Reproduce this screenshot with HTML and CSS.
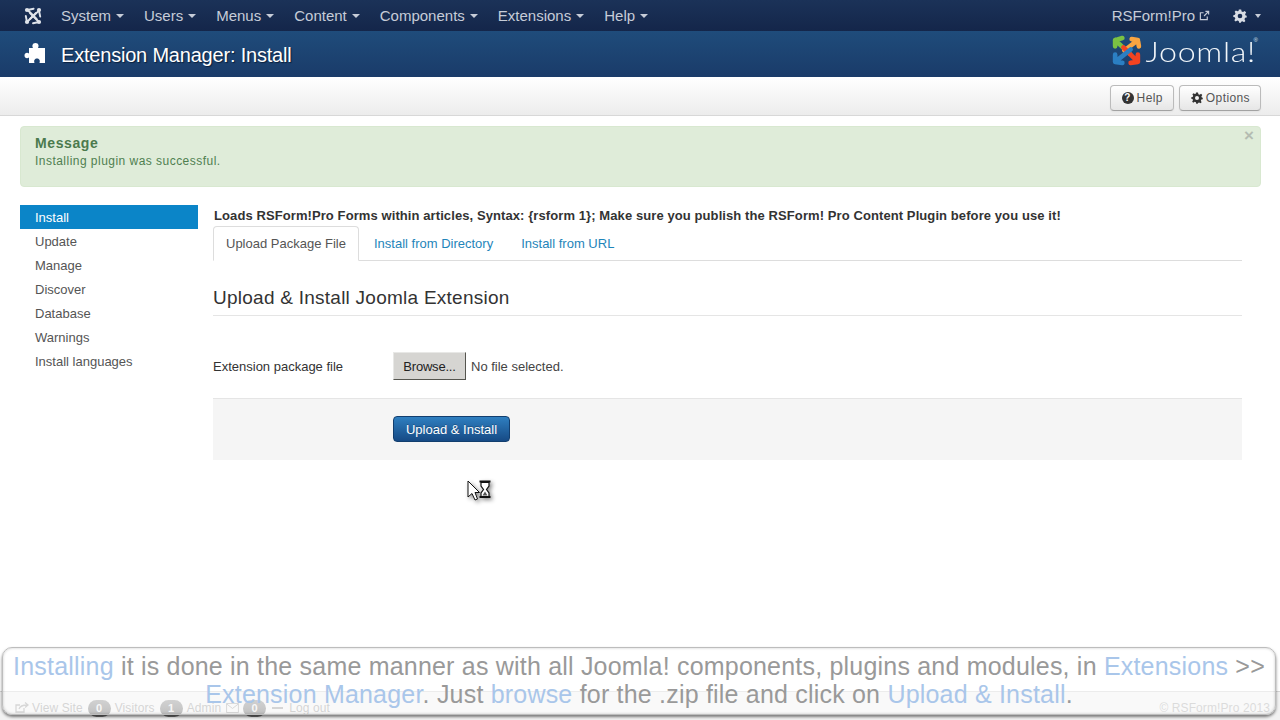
FILE: index.html
```html
<!DOCTYPE html>
<html lang="en">
<head>
<meta charset="utf-8">
<title>Extension Manager: Install</title>
<link rel="stylesheet" href="styles.css">
</head>
<body>
<nav class="navbar">
  <svg class="nav-logo" viewBox="0 0 30 30"><g class="logo-white"><path d="M6 5 L21 20 M6 5 L16 3"/><path d="M25 6 L10 20 M25 6 L27 16"/><path d="M25 25 L10 10 M25 25 L15 27"/><path d="M5 25 L20 10 M5 25 L3 15"/><circle cx="5" cy="5" r="3.500"/><circle cx="25" cy="5" r="3.500"/><circle cx="25" cy="25" r="3.500"/><circle cx="5" cy="25" r="3.500"/></g></svg>
  <ul class="menu">
    <li>System<i class="caret"></i></li>
    <li>Users<i class="caret"></i></li>
    <li>Menus<i class="caret"></i></li>
    <li>Content<i class="caret"></i></li>
    <li>Components<i class="caret"></i></li>
    <li>Extensions<i class="caret"></i></li>
    <li>Help<i class="caret"></i></li>
  </ul>
  <div class="nav-right">
    <span class="site">RSForm!Pro</span>
    <svg class="ext-icon" viewBox="0 0 12 12"><path d="M9 7 V10.500 H1.500 V3 H5 M5.500 6.500 L10.500 1.500 M7 1.500 H10.500 V5"/></svg>
    <svg class="gear gear-nav" viewBox="0 0 24 24"><use href="#gear-shape"/></svg>
    <i class="caret"></i>
  </div>
</nav>

<header class="titlebar">
  <svg class="puzzle" viewBox="0 0 22 21"><path d="M5 6 H9 C8 4.500 8 1 11.500 1 C15 1 15 4.500 14 6 H21 V21 H15.500 C16.500 18 15 16.500 13 16.500 C11 16.500 9.500 18 10.500 21 H5 V15.500 C3 17 0.500 16 0.500 13.500 C0.500 11 3 10 5 11.500 Z"/></svg>
  <h1>Extension Manager: Install</h1>
  <div class="brand">
    <svg class="brand-mark" viewBox="0 0 30 30">
      <path class="j-green" d="M4 5 L18 18 M4 5 L4 11 M4 5 L11 3"/>
      <path class="j-orange" d="M26 5 L13 15 M26 5 L20 4 M26 5 L27 11"/>
      <path class="j-red" d="M26 26 L12 12 M26 26 L26 19 M26 26 L19 27"/>
      <path class="j-blue" d="M4 26 L19 14 M4 26 L4 19 M4 26 L11 27"/>
    </svg>
    <span class="brand-name">Joomla!</span>
    <span class="brand-reg">®</span>
  </div>
</header>

<div class="toolbar">
  <button class="tool-btn"><span class="help-dot">?</span>Help</button>
  <button class="tool-btn"><svg class="gear gear-btn" viewBox="0 0 24 24"><use href="#gear-shape"/></svg>Options</button>
</div>

<div class="alert">
  <span class="alert-close">×</span>
  <h4>Message</h4>
  <p>Installing plugin was successful.</p>
</div>

<div class="layout">
  <ul class="side">
    <li class="active">Install</li>
    <li>Update</li>
    <li>Manage</li>
    <li>Discover</li>
    <li>Database</li>
    <li>Warnings</li>
    <li>Install languages</li>
  </ul>
  <main class="content">
    <p class="notice">Loads RSForm!Pro Forms within articles, Syntax: {rsform 1}; Make sure you publish the RSForm! Pro Content Plugin before you use it!</p>
    <div class="tabs">
      <span class="tab current">Upload Package File</span>
      <span class="tab">Install from Directory</span>
      <span class="tab">Install from URL</span>
    </div>
    <h2>Upload &amp; Install Joomla Extension</h2>
    <div class="field">
      <span class="field-label">Extension package file</span>
      <span class="browse">Browse...</span>
      <span class="no-file">No file selected.</span>
    </div>
    <div class="actions">
      <button class="primary">Upload &amp; Install</button>
    </div>
  </main>
</div>

<svg class="cursor" viewBox="0 0 26 24">
  <path class="cursor-arrow" d="M1 1 V17 L5 13.500 L8 20 L10.500 19 L8 12.500 H12.500 Z"/>
  <path class="cursor-glass" d="M14 2.500 H22 V6 L19.500 9.500 L22 13 V16.500 H14 V13 L16.500 9.500 L14 6 Z"/>
  <path class="cursor-bars" d="M12.500 1.500 H23.500 M12.500 17 H23.500"/>
  <path class="cursor-sand" d="M15.500 15.500 L18 11.500 L20.500 15.500 Z"/>
</svg>

<footer class="status">
  <span class="st-item"><svg class="st-icon" viewBox="0 0 14 12"><path d="M9 7 V11 H1 V4 H5 M4 8 C5 5 8 4 12 4 M10 1.500 L13 4 L10 6.500"/></svg>View Site</span>
  <span class="badge">0</span><span class="st-item">Visitors</span>
  <span class="badge">1</span><span class="st-item">Admin</span>
  <svg class="st-mail" viewBox="0 0 14 11"><path d="M0.500 0.500 H13.500 V10.500 H0.500 Z M0.500 1 L7 6 L13.500 1"/></svg>
  <span class="badge">0</span>
  <span class="st-dash"></span><span class="st-item">Log out</span>
  <span class="copyright">© RSForm!Pro 2013</span>
</footer>

<div class="caption">
  <p><b>Installing</b> it is done in the same manner as with all Joomla! components, plugins and modules, in <b>Extensions</b> &gt;&gt; <b>Extension Manager</b>. Just <b>browse</b> for the .zip file and click on <b>Upload &amp; Install</b>.</p>
</div>

<svg class="defs" aria-hidden="true"><defs>
  <path id="gear-shape" d="M10 1 H14 L14.800 4.300 L17.200 5.300 L20.100 3.500 L22.500 5.900 L20.700 8.800 L21.700 11 L23.500 11.500 V14.500 L20.700 15.200 L19.700 17.600 L21.200 20.500 L19 22.700 L16.200 21 L14 22 L13.500 23.500 H10.500 L9.800 20.700 L7.400 19.700 L4.500 21.400 L2.300 19.100 L4 16.300 L3 14 L0.500 13.500 V10.500 L3.300 9.800 L4.300 7.400 L2.800 4.600 L5 2.400 L7.800 4 L9.500 3.300 Z M12 8 A4 4 0 1 0 12 16 A4 4 0 1 0 12 8 Z"/>
</defs></svg>
</body>
</html>
```

FILE: styles.css
```css
* { box-sizing: border-box; }
html, body { height: 720px; overflow: hidden; }
body {
  margin: 0;
  position: relative;
  background: #fff;
  font-family: "Liberation Sans", Arial, sans-serif;
  font-size: 13px;
  color: #333;
}
ul { list-style: none; margin: 0; padding: 0; }
p, h1, h2, h4 { margin: 0; font-weight: normal; }
.defs { position: absolute; width: 0; height: 0; }

.navbar {
  height: 31px;
  display: flex;
  align-items: center;
  background: linear-gradient(#1b3258, #14264a);
  color: #c6ccd8;
  font-size: 15px;
  padding-left: 24px;
}
.nav-logo { width: 18px; height: 18px; margin-right: 9px; }
.logo-white path { fill: none; stroke: #dfe3ea; stroke-width: 3.200; stroke-linecap: round; }
.logo-white circle { fill: #dfe3ea; }
.menu { display: flex; }
.menu li { padding: 0 10px; display: flex; align-items: center; }
.caret {
  display: inline-block;
  width: 0; height: 0;
  margin-left: 5px;
  margin-top: 1px;
  border-left: 4px solid transparent;
  border-right: 4px solid transparent;
  border-top: 4px solid #c6ccd8;
}
.nav-right { margin-left: auto; display: flex; align-items: center; padding-right: 19px; }
.nav-right .caret { margin-left: 8px; border-left-width: 3px; border-right-width: 3px; }
.ext-icon { width: 11px; height: 11px; margin-left: 4px; }
.ext-icon path { fill: none; stroke: #c6ccd8; stroke-width: 1.300; }
.gear-nav { width: 14px; height: 14px; margin-left: 23px; fill: #d8dce4; fill-rule: evenodd; }

.titlebar {
  height: 46px;
  display: flex;
  align-items: center;
  padding-left: 24px;
  background: linear-gradient(#1f4c7b, #1a3b69);
  color: #fff;
}
.puzzle { width: 22px; height: 21px; margin-right: 15px; margin-top: -3px; fill: #fff; }
.titlebar h1 {
  font-size: 20px;
  line-height: 24px;
  letter-spacing: -.2px;
  padding-top: 2px;
  text-shadow: 1px 1px 1px #0a1f3c;
}
.brand { position: relative; margin-left: auto; display: flex; align-items: center; padding-right: 24px; margin-top: -7px; }
.brand-mark { width: 31px; height: 31px; margin-right: 18px; }
.brand-mark path { fill: none; stroke-width: 4.500; stroke-linecap: round; stroke-linejoin: round; }
.j-green { stroke: #7ac143; }
.j-orange { stroke: #f9a541; }
.j-red { stroke: #f44321; }
.j-blue { stroke: #2b7fc3; }
.brand-name {
  font-family: "Lato", sans-serif;
  font-weight: 300;
  font-size: 28px;
  line-height: 32px;
  letter-spacing: .6px;
  color: #f2f6fa;
  transform: scaleX(1.150);
  transform-origin: right center;
}
.brand-reg { position: absolute; right: 22px; top: 2px; font-size: 6px; color: #dfe8f0; }

.toolbar {
  height: 39px;
  display: flex;
  justify-content: flex-end;
  align-items: center;
  gap: 5px;
  padding: 3px 19px 0 0;
  background: linear-gradient(#fff, #ececec);
  border-bottom: 1px solid #d8d8d8;
}
.tool-btn {
  height: 26px;
  display: flex;
  align-items: center;
  padding: 0 10px 0 11px;
  font: 12px "Liberation Sans", Arial, sans-serif;
  letter-spacing: .4px;
  color: #555;
  background: linear-gradient(#fff, #e6e6e6);
  border: 1px solid #bbb;
  border-bottom-color: #a2a2a2;
  border-radius: 4px;
  box-shadow: 0 1px 2px rgba(0, 0, 0, .05);
}
.help-dot {
  width: 12px; height: 12px;
  border-radius: 50%;
  background: #333;
  color: #fff;
  font-size: 10px;
  font-weight: bold;
  line-height: 12px;
  text-align: center;
  margin-right: 3px;
}
.gear-btn { width: 12px; height: 12px; margin-right: 3px; fill: #333; fill-rule: evenodd; }

.alert {
  position: relative;
  margin: 10px 19px 0 20px;
  height: 61px;
  padding: 8px 14px;
  background: #dfecd9;
  border: 1px solid #d8e8d0;
  border-radius: 4px;
  color: #4f7f50;
}
.alert h4 { font-size: 14px; font-weight: bold; line-height: 17px; letter-spacing: .6px; color: #4b7a4d; }
.alert p { font-size: 12px; line-height: 18px; letter-spacing: .47px; }
.alert-close {
  position: absolute;
  top: 2px; right: 6px;
  font-size: 17px;
  font-weight: bold;
  line-height: 14px;
  color: #b4bcb2;
}

.layout { display: flex; margin-top: 18px; padding: 0 38px 0 20px; }
.side { width: 178px; margin-right: 15px; flex: none; }
.side li { height: 24px; line-height: 26px; padding-left: 15px; color: #555; }
.side li.active { background: #0b85c8; color: #fff; }
.content { flex: 1; min-width: 0; }
.notice { font-weight: bold; line-height: 21px; padding-left: 1px; color: #333; letter-spacing: .09px; }
.tabs { display: flex; height: 35px; border-bottom: 1px solid #ddd; }
.tab { padding: 0 13px; line-height: 35px; color: #1f85ba; margin-right: 2px; white-space: nowrap; }
.tab.current {
  height: 35px;
  color: #555;
  background: #fff;
  border: 1px solid #ddd;
  border-bottom-color: #fff;
  border-radius: 4px 4px 0 0;
  padding: 0 12px;
  line-height: 33px;
}
.content h2 {
  margin-top: 23px;
  height: 32px;
  font-size: 19px;
  line-height: 28px;
  letter-spacing: .25px;
  color: #333;
  border-bottom: 1px solid #e5e5e5;
}
.field { display: flex; align-items: center; margin-top: 36px; height: 28px; }
.field-label { width: 180px; color: #333; padding-top: 1px; }
.browse {
  width: 73px; height: 28px;
  display: flex; align-items: center; justify-content: center;
  background: #d6d5d2;
  border: 1px solid;
  border-color: #e8e8e6 #55554f #55554f #e8e8e6;
  color: #222;
  letter-spacing: -.2px;
}
.no-file { margin-left: 5px; color: #444; padding-top: 1px; }
.actions {
  margin-top: 18px;
  height: 62px;
  padding: 17px 0 0 180px;
  background: #f5f5f5;
  border-top: 1px solid #e5e5e5;
}
.primary {
  width: 117px; height: 26px;
  padding: 1px 0 0;
  font: 13px "Liberation Sans", Arial, sans-serif;
  color: #fff;
  background: linear-gradient(#2f7fc0, #164a85);
  border: 1px solid #123e6e;
  border-radius: 4px;
  text-shadow: 0 -1px 0 rgba(0, 0, 0, .25);
}

.cursor { position: absolute; left: 467px; top: 480px; width: 26px; height: 24px; filter: drop-shadow(2px 2px 2px rgba(0, 0, 0, .45)); }
.cursor-arrow { fill: #fff; stroke: #111; stroke-width: 1; }
.cursor-glass { fill: #fff; stroke: #111; stroke-width: 1.200; }
.cursor-bars { fill: none; stroke: #111; stroke-width: 2; }
.cursor-sand { fill: #555; }

.status {
  position: absolute;
  left: 0; right: 0; bottom: 0;
  height: 29px;
  display: flex;
  align-items: center;
  padding: 4px 10px 0 15px;
  background: #f2f2f2;
  border-top: 1px solid #d4d4d4;
  font-size: 12px;
  letter-spacing: .1px;
  color: #a2a2a2;
}
.st-item { margin-right: 5px; }
.st-icon { width: 14px; height: 12px; margin-right: 3px; vertical-align: -1px; }
.st-icon path { fill: none; stroke: #a6a6a6; stroke-width: 1.300; }
.badge {
  width: 23px; height: 17px;
  margin-right: 4px;
  text-align: center;
  border-radius: 9px;
  background: linear-gradient(#9a9a9a, #6f6f6f);
  color: #eee;
  font-size: 11px;
  font-weight: bold;
  line-height: 17px;
}
.st-mail { width: 13px; height: 10px; margin-right: 4px; fill: none; stroke: #a2a2a2; }
.st-dash { width: 11px; height: 2px; margin: 0 6px 0 2px; background: #a2a2a2; }
.copyright { margin-left: auto; color: #b0b0b0; }

.caption {
  position: absolute;
  left: 2px; top: 647px;
  width: 1274px; height: 68px;
  padding-top: 4px;
  border-radius: 10px;
  background: rgba(255, 255, 255, .55);
  border: 1px solid #bdbdbd;
  box-shadow: 0 2px 3px rgba(0, 0, 0, .5), inset 0 0 3px rgba(0, 0, 0, .2);
}
.caption p {
  font-size: 25px;
  line-height: 28px;
  letter-spacing: .2px;
  text-align: center;
  color: #999;
}
.caption b { font-weight: normal; color: #a9c6ea; }
```
